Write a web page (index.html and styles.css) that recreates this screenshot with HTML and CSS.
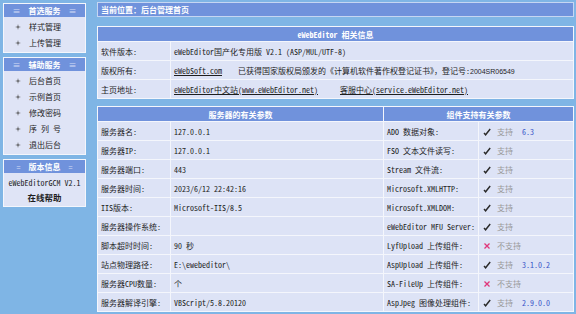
FILE: index.html
```html
<!DOCTYPE html>
<html lang="zh-CN">
<head>
    <meta charset="UTF-8">
    <title>后台管理首页</title>
    <link rel="stylesheet" href="styles.css">
</head>
<body>
    <div class="side">
        <div class="side-box">
            <h3><span class="eq">≡</span>首选服务<span class="eq">≡</span></h3>
            <ul class="menu">
                <li><svg class="star" viewBox="0 0 6 6"><polygon points="3,0 3.5,2.5 6,3 3.5,3.5 3,6 2.5,3.5 0,3 2.5,2.5"/></svg>样式管理</li>
                <li><svg class="star" viewBox="0 0 6 6"><polygon points="3,0 3.5,2.5 6,3 3.5,3.5 3,6 2.5,3.5 0,3 2.5,2.5"/></svg>上传管理</li>
            </ul>
        </div>
        <div class="side-box">
            <h3><span class="eq">≡</span>辅助服务<span class="eq">≡</span></h3>
            <ul class="menu">
                <li><svg class="star" viewBox="0 0 6 6"><polygon points="3,0 3.5,2.5 6,3 3.5,3.5 3,6 2.5,3.5 0,3 2.5,2.5"/></svg>后台首页</li>
                <li><svg class="star" viewBox="0 0 6 6"><polygon points="3,0 3.5,2.5 6,3 3.5,3.5 3,6 2.5,3.5 0,3 2.5,2.5"/></svg>示例首页</li>
                <li><svg class="star" viewBox="0 0 6 6"><polygon points="3,0 3.5,2.5 6,3 3.5,3.5 3,6 2.5,3.5 0,3 2.5,2.5"/></svg>修改密码</li>
                <li><svg class="star" viewBox="0 0 6 6"><polygon points="3,0 3.5,2.5 6,3 3.5,3.5 3,6 2.5,3.5 0,3 2.5,2.5"/></svg>序&nbsp;列&nbsp;号</li>
                <li><svg class="star" viewBox="0 0 6 6"><polygon points="3,0 3.5,2.5 6,3 3.5,3.5 3,6 2.5,3.5 0,3 2.5,2.5"/></svg>退出后台</li>
            </ul>
        </div>
        <div class="side-box">
            <h3><span class="eq">=</span>版本信息<span class="eq">=</span></h3>
            <div class="version">
                <div>eWebEditorGCM V2.1</div>
                <div class="help">在线帮助</div>
            </div>
        </div>
    </div>

    <div class="main">
        <div class="loc">当前位置：后台管理首页</div>

        <table class="grid info">
            <colgroup><col class="c-label"><col></colgroup>
            <tr><th colspan="2">eWebEditor 相关信息</th></tr>
            <tr><td>软件版本:</td><td>eWebEditor国产化专用版 V2.1 (ASP/MUL/UTF-8)</td></tr>
            <tr><td>版权所有:</td><td><a href="#">eWebSoft.com</a><span class="gap">已获得国家版权局颁发的《计算机软件著作权登记证书》，登记号:<span class="reg">2004SR06549</span></span></td></tr>
            <tr><td>主页地址:</td><td><a href="#">eWebEditor中文站(www.eWebEditor.net)</a><a class="gap2" href="#">客服中心(service.eWebEditor.net)</a></td></tr>
        </table>

        <table class="grid params">
            <colgroup><col class="c-label"><col class="c-value"><col class="c-comp"><col></colgroup>
            <tr><th colspan="2">服务器的有关参数</th><th colspan="2">组件支持有关参数</th></tr>
            <tr><td>服务器名:</td><td>127.0.0.1</td><td>ADO 数据对象:</td><td><svg class="ok" viewBox="0 0 8 8"><path d="M1 5 L2.6 6.8 L7.2 1"/></svg><span class="st">支持</span><span class="ver">6.3</span></td></tr>
            <tr><td>服务器IP:</td><td>127.0.0.1</td><td>FSO 文本文件读写:</td><td><svg class="ok" viewBox="0 0 8 8"><path d="M1 5 L2.6 6.8 L7.2 1"/></svg><span class="st">支持</span></td></tr>
            <tr><td>服务器端口:</td><td>443</td><td>Stream 文件流:</td><td><svg class="ok" viewBox="0 0 8 8"><path d="M1 5 L2.6 6.8 L7.2 1"/></svg><span class="st">支持</span></td></tr>
            <tr><td>服务器时间:</td><td>2023/6/12 22:42:16</td><td>Microsoft.XMLHTTP:</td><td><svg class="ok" viewBox="0 0 8 8"><path d="M1 5 L2.6 6.8 L7.2 1"/></svg><span class="st">支持</span></td></tr>
            <tr><td>IIS版本:</td><td>Microsoft-IIS/8.5</td><td>Microsoft.XMLDOM:</td><td><svg class="ok" viewBox="0 0 8 8"><path d="M1 5 L2.6 6.8 L7.2 1"/></svg><span class="st">支持</span></td></tr>
            <tr><td>服务器操作系统:</td><td></td><td>eWebEditor MFU Server:</td><td><svg class="ok" viewBox="0 0 8 8"><path d="M1 5 L2.6 6.8 L7.2 1"/></svg><span class="st">支持</span></td></tr>
            <tr><td>脚本超时时间:</td><td>90 秒</td><td>LyfUpload 上传组件:</td><td><svg class="no" viewBox="0 0 8 8"><path d="M1.5 1.5 L6.5 6.5 M6.5 1.5 L1.5 6.5"/></svg><span class="st">不支持</span></td></tr>
            <tr><td>站点物理路径:</td><td>E:\ewebeditor\</td><td>AspUpload 上传组件:</td><td><svg class="ok" viewBox="0 0 8 8"><path d="M1 5 L2.6 6.8 L7.2 1"/></svg><span class="st">支持</span><span class="ver">3.1.0.2</span></td></tr>
            <tr><td>服务器CPU数量:</td><td>个</td><td>SA-FileUp 上传组件:</td><td><svg class="no" viewBox="0 0 8 8"><path d="M1.5 1.5 L6.5 6.5 M6.5 1.5 L1.5 6.5"/></svg><span class="st">不支持</span></td></tr>
            <tr><td>服务器解译引擎:</td><td>VBScript/5.8.20120</td><td>AspJpeg 图像处理组件:</td><td><svg class="ok" viewBox="0 0 8 8"><path d="M1 5 L2.6 6.8 L7.2 1"/></svg><span class="st">支持</span><span class="ver">2.9.0.0</span></td></tr>
        </table>
    </div>
</body>
</html>
```

FILE: styles.css
```css
body {
    margin: 0;
    height: 314px;
    overflow: hidden;
    display: flex;
    background: #7fb5e5;
    color: #1e1e1e;
    font: 8px "Noto Sans Mono CJK SC", "Noto Sans CJK SC", monospace;
}

/* left menu */
.side {
    width: 83px;
    padding: 3px 0 0 3px;
    display: flex;
    flex-direction: column;
    gap: 4px;
}

.side-box {
    background: #dfe4f6;
    border: 1px solid #f4f6fc;
}

.side-box h3 {
    margin: 0;
    height: 13px;
    line-height: 13px;
    background: #7092dc;
    color: #fff;
    font-size: 8px;
    font-weight: bold;
    text-align: center;
}

.side-box .eq {
    color: #d4ddf6;
    font-weight: normal;
    margin: 0 8px;
}

.menu {
    list-style: none;
    margin: 0;
    padding: 2px 0 1px;
}

.menu li {
    height: 16px;
    line-height: 16px;
    padding-left: 11px;
    display: flex;
    align-items: center;
    gap: 8px;
}

.star {
    width: 6px;
    height: 6px;
    fill: #4a4a4a;
}

.version {
    padding: 2px 0 1px;
    text-align: center;
    line-height: 15px;
}

.version .help {
    font-size: 8.5px;
    font-weight: bold;
}

/* right side */
.main {
    width: 477px;
    margin-left: 11px;
}

.loc {
    margin-top: 2px;
    height: 13px;
    line-height: 13px;
    padding-left: 3px;
    background: #7092dc;
    border: 1px solid #c6d6f2;
    color: #fff;
    font-weight: bold;
}

.grid {
    width: 477px;
    table-layout: fixed;
    border-collapse: collapse;
    border: 1px solid #fff;
}

.grid th,
.grid td {
    border: 1px solid #f4f6fc;
    padding: 0 3px;
    white-space: nowrap;
    overflow: hidden;
}

.grid th {
    height: 14px;
    background: #7092dc;
    color: #fff;
    font-weight: bold;
}

.grid td {
    height: 18px;
    background: #dde3f6;
}

.info {
    margin-top: 9px;
}

.params {
    margin-top: 7px;
}

.c-label { width: 73px; }
.c-value { width: 213px; }
.c-comp { width: 95px; }

.grid a {
    color: #1e1e1e;
}

.gap {
    margin-left: 16px;
}

.gap2 {
    margin-left: 22px;
}

.reg {
    font: 7px "Liberation Sans", sans-serif;
}

.ok,
.no {
    width: 8px;
    height: 8px;
    vertical-align: -1px;
    fill: none;
    margin-left: 1px;
}

.ok path {
    stroke: #2a2a2a;
    stroke-width: 1.4;
}

.no path {
    stroke: #e0357a;
    stroke-width: 1.3;
}

.st {
    color: #9a9a9a;
    margin-left: 6px;
}

.ver {
    color: #3a55c8;
    margin-left: 9px;
}
```
